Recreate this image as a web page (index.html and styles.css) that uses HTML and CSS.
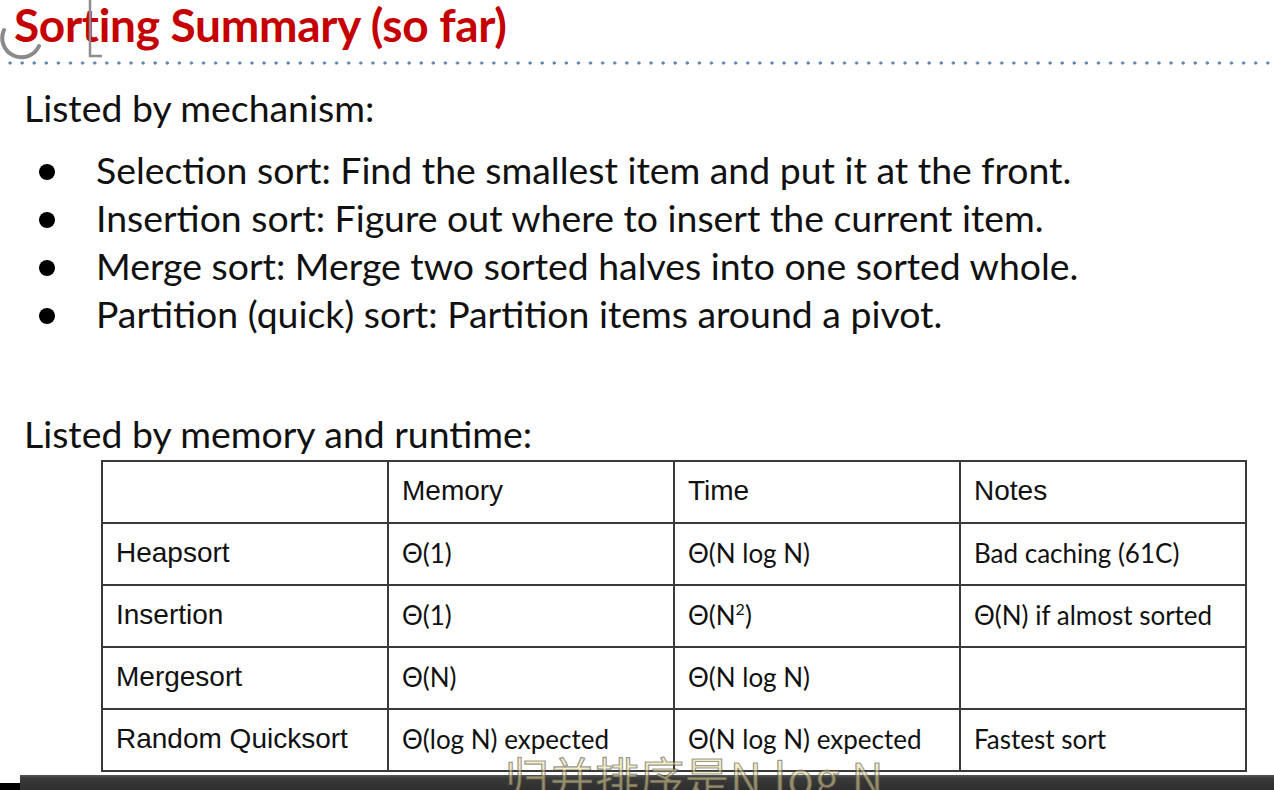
FILE: index.html
```html
<!DOCTYPE html>
<html lang="en">
<head>
<meta charset="utf-8">
<title>Sorting Summary (so far)</title>
<link rel="stylesheet" href="styles.css">
</head>
<body>
<div class="slide">
  <header class="title-bar">
    <h1 class="title">Sorting Summary (so far)</h1>
  </header>
  <div class="dots"></div>
  <section class="content">
    <p class="lead">Listed by mechanism:</p>
    <ul class="mech">
      <li>Selection sort: Find the smallest item and put it at the front.</li>
      <li>Insertion sort: Figure out where to insert the current item.</li>
      <li>Merge sort: Merge two sorted halves into one sorted whole.</li>
      <li>Partition (quick) sort: Partition items around a pivot.</li>
    </ul>
    <p class="lead lead-table">Listed by memory and runtime:</p>
    <table class="sorts">
      <colgroup>
        <col class="col"><col class="col"><col class="col"><col class="col">
      </colgroup>
      <tr class="head">
        <td class="name"></td>
        <td class="name">Memory</td>
        <td class="name">Time</td>
        <td class="name">Notes</td>
      </tr>
      <tr>
        <td class="name">Heapsort</td>
        <td>Θ(1)</td>
        <td>Θ(N log N)</td>
        <td>Bad caching (61C)</td>
      </tr>
      <tr>
        <td class="name">Insertion</td>
        <td>Θ(1)</td>
        <td>Θ(N<sup>2</sup>)</td>
        <td>Θ(N) if almost sorted</td>
      </tr>
      <tr>
        <td class="name">Mergesort</td>
        <td>Θ(N)</td>
        <td>Θ(N log N)</td>
        <td></td>
      </tr>
      <tr>
        <td class="name">Random Quicksort</td>
        <td>Θ(log N) expected</td>
        <td>Θ(N log N) expected</td>
        <td>Fastest sort</td>
      </tr>
    </table>
  </section>
  <div class="player-bar">
    <div class="player-edge"></div>
    <div class="player-fill"></div>
  </div>
</div>
<svg class="spinner" width="60" height="62" viewBox="0 0 60 62" aria-hidden="true">
  <path d="M4 30 A19 19 0 0 0 39 46" fill="none" stroke="#8a8a8a" stroke-width="4" stroke-linecap="round"/>
</svg>
<svg class="ibeam" width="18" height="60" viewBox="0 0 18 60" aria-hidden="true">
  <path d="M4 0 V56 H16" fill="none" stroke="#8d8d8d" stroke-width="2.5"/>
</svg>
<div class="subtitle">归并排序是N log N</div>
</body>
</html>
```
FILE: styles.css
```css
html, body {
  margin: 0;
  padding: 0;
  background: #ffffff;
  overflow: hidden;
}

body {
  width: 1274px;
  height: 790px;
  position: relative;
}

.slide {
  display: flex;
  flex-direction: column;
  height: 790px;
}

.title-bar {
  padding-left: 14px;
}

.title {
  margin: 0;
  font-family: Lato, "Liberation Sans", sans-serif;
  font-weight: 700;
  font-size: 46px;
  line-height: 50px;
  color: #c40000;
  letter-spacing: -0.3px;
}

.dots {
  margin-top: 11px;
  height: 4px;
  margin-left: 8px;
  background-image: radial-gradient(circle at 2px 2px, #5d82ab 1.3px, transparent 1.9px);
  background-size: 12.1px 4px;
  background-repeat: repeat-x;
}

.content {
  font-family: Lato, "Open Sans", sans-serif;
  color: #111111;
  padding-left: 24px;
}

.lead {
  margin: 0;
  font-size: 37.4px;
  line-height: 40px;
  margin-top: 23px;
}

.mech {
  list-style: none;
  margin: 18px 0 0 0;
  padding: 0;
}

.mech li {
  position: relative;
  font-size: 37.4px;
  line-height: 48px;
  padding-left: 72px;
}

.mech li::before {
  content: "";
  position: absolute;
  left: 15px;
  top: 18px;
  width: 16px;
  height: 16px;
  border-radius: 50%;
  background: #000000;
}

.lead-table {
  margin-top: 76px;
}

.sorts {
  margin: 6px 0 0 77px;
  border-collapse: collapse;
  table-layout: fixed;
  width: 1144px;
  font-family: Lato, "Open Sans", sans-serif;
  font-size: 26px;
  color: #111111;
}

.sorts .col {
  width: 286px;
}

.sorts td {
  border: 2px solid #3a3a3a;
  height: 58px;
  padding: 0 0 2px 13px;
  vertical-align: middle;
  white-space: nowrap;
  overflow: hidden;
}

.sorts td.name {
  font-family: "Liberation Sans", Arial, sans-serif;
  font-size: 28px;
}

.sorts sup {
  font-size: 16px;
  line-height: 0;
  vertical-align: 10px;
}

.player-bar {
  margin-top: auto;
  height: 15px;
  display: flex;
}

.player-edge {
  width: 20px;
  background: linear-gradient(#ffffff 0, #ffffff 8px, #000000 8px);
}

.player-fill {
  flex: 1;
  background: linear-gradient(#555555 0, #3a3a3a 3px, #2e2e2e 100%);
}

.spinner {
  position: absolute;
  left: 0;
  top: 0;
}

.ibeam {
  position: absolute;
  left: 86px;
  top: 0;
}

.subtitle {
  position: absolute;
  left: 505px;
  top: 751px;
  font-family: "Noto Sans CJK SC", "Liberation Sans", sans-serif;
  font-size: 44px;
  line-height: 50px;
  white-space: nowrap;
  color: rgba(236, 222, 150, 0.55);
  -webkit-text-stroke: 1.2px rgba(70, 70, 70, 0.55);
  letter-spacing: 1px;
}
```
